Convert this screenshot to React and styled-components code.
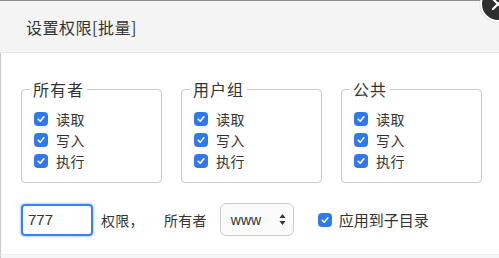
import React from "react";
import styled, { createGlobalStyle } from "styled-components";

const GlobalStyle = createGlobalStyle`
  html, body {
    margin: 0;
    padding: 0;
    background: #ffffff;
  }
  body {
    font-family: "Noto Sans CJK SC", "Liberation Sans", sans-serif;
    color: #333;
  }
`;

const Frame = styled.div`
  position: relative;
  width: 499px;
  height: 258px;
  overflow: hidden;
  background: #ffffff;
`;

const Shade = styled.div`
  height: 1px;
  background: #8c8c8c;
`;

const Header = styled.div`
  height: 51px;
  display: flex;
  align-items: center;
  padding-left: 26px;
  background: #f4f4f4;
  border-bottom: 1px solid #e8e8e8;
  font-size: 16px;
  letter-spacing: 0.5px;
  color: #333;
`;

const CloseButton = styled.div`
  position: absolute;
  left: 480px;
  top: -14px;
  width: 32px;
  height: 32px;
  border-radius: 50%;
  background: #2f2f2f;
  border: 2px solid #ffffff;
  box-shadow: 0 0 1px rgba(0, 0, 0, 0.4);
  display: flex;
  align-items: center;
  justify-content: center;
`;

const Body = styled.div`
  height: 201px;
  box-sizing: border-box;
  padding: 25px 17px 0 20px;
  border-left: 1px solid #c9c9c9;
`;

const Groups = styled.div`
  display: grid;
  grid-template-columns: repeat(3, 141px);
  column-gap: 19px;
`;

const Group = styled.fieldset`
  margin: 0;
  min-width: 0;
  padding: 8px 12px 11px 12px;
  border: 1px solid #cacaca;
  border-radius: 4px;
`;

const Legend = styled.legend`
  padding: 0 3px;
  margin-left: -4px;
  font-size: 16px;
  line-height: 22px;
  letter-spacing: 1px;
  color: #333;
`;

const CheckRow = styled.label`
  display: flex;
  align-items: center;
  height: 21px;
  font-size: 14px;
  letter-spacing: 0.5px;
  color: #333;
`;

const Box = styled.span`
  width: 14px;
  height: 14px;
  flex: none;
  border-radius: 4px;
  background: #2f78f0;
  display: flex;
  align-items: center;
  justify-content: center;
  margin-right: ${(p) => p.$gap || 8}px;
`;

const BottomRow = styled.div`
  display: flex;
  align-items: center;
  margin-top: 20px;
  font-size: 14px;
  color: #333;
`;

const ModeInput = styled.div`
  width: 72px;
  height: 32px;
  box-sizing: border-box;
  border: 2px solid #3a80f4;
  border-radius: 4px;
  box-shadow: 0 0 3px rgba(58, 128, 244, 0.7);
  padding-left: 5px;
  display: flex;
  align-items: center;
  font-family: "Liberation Sans", Arial, sans-serif;
  font-size: 15px;
  color: #333;
`;

const Text = styled.span`
  margin-left: ${(p) => p.$ml}px;
  letter-spacing: 0.3px;
`;

const SelectBox = styled.div`
  margin-left: 13px;
  width: 74px;
  height: 33px;
  box-sizing: border-box;
  border: 1px solid #cccccc;
  border-radius: 6px;
  background: #fafafa;
  display: flex;
  align-items: center;
  justify-content: space-between;
  padding: 0 7px 0 10px;
  font-family: "Liberation Sans", Arial, sans-serif;
  font-size: 14px;
  color: #333;
`;

const ApplyLabel = styled.label`
  display: flex;
  align-items: center;
  margin-left: 24px;
  font-size: 15px;
  color: #333;
`;

const Footer = styled.div`
  height: 6px;
  background: #f5f6f8;
  border-top: 1px solid #eeeeee;
  border-left: 1px solid #c9c9c9;
`;

const Check = ({ gap }) => (
  <Box $gap={gap}>
    <svg width="10" height="10" viewBox="0 0 10 10">
      <path d="M2.2 5.2 L4.2 7.2 L7.9 2.8" fill="none" stroke="#fff" strokeWidth="1.6" strokeLinecap="round" strokeLinejoin="round" />
    </svg>
  </Box>
);

const groups = ["所有者", "用户组", "公共"];
const perms = ["读取", "写入", "执行"];

export default function App() {
  return (
    <>
      <GlobalStyle />
      <Frame>
        <Shade />
        <Header>设置权限[批量]</Header>
        <CloseButton>
          <svg width="16" height="16" viewBox="0 0 16 16">
            <path d="M3 3 L13 13 M13 3 L3 13" stroke="#fff" strokeWidth="2.2" strokeLinecap="round" />
          </svg>
        </CloseButton>
        <Body>
          <Groups>
            {groups.map((g) => (
              <Group key={g}>
                <Legend>{g}</Legend>
                {perms.map((p) => (
                  <CheckRow key={p}>
                    <Check />
                    {p}
                  </CheckRow>
                ))}
              </Group>
            ))}
          </Groups>
          <BottomRow>
            <ModeInput>777</ModeInput>
            <Text $ml={8}>权限，</Text>
            <Text $ml={20}>所有者</Text>
            <SelectBox>
              www
              <svg width="7" height="13" viewBox="0 0 7 13">
                <path d="M3.5 1 L6.5 5 L0.5 5 Z M3.5 12 L6.5 8 L0.5 8 Z" fill="#333" />
              </svg>
            </SelectBox>
            <ApplyLabel>
              <Check gap={7} />
              应用到子目录
            </ApplyLabel>
          </BottomRow>
        </Body>
        <Footer />
      </Frame>
    </>
  );
}
